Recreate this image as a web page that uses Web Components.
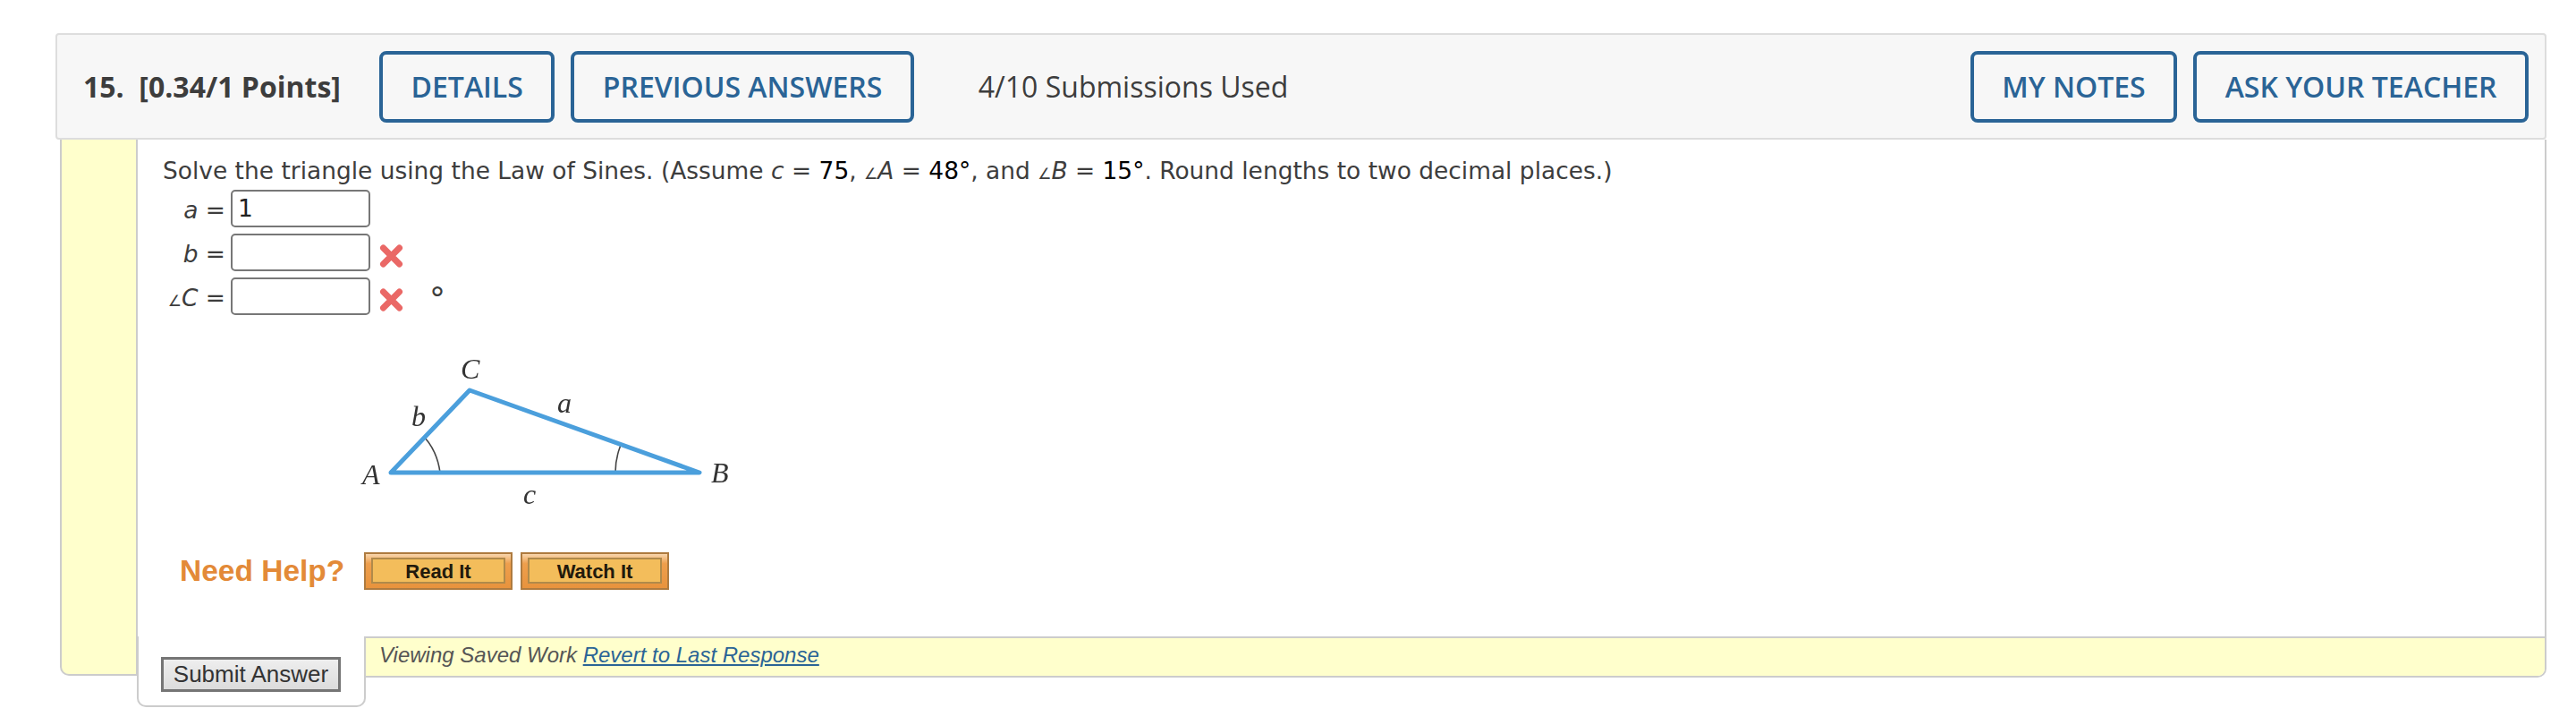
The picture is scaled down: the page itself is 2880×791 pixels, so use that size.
<!DOCTYPE html>
<html><head><meta charset="utf-8">
<style>
html,body{margin:0;padding:0;background:#fff}
body{font-family:"Open Sans",sans-serif;width:2880px;height:791px;overflow:hidden}
</style></head><body>
<question-card>
  <question-header slot="header" num="15." points="[0.34/1 Points]" used="4/10 Submissions Used"></question-header>
  <question-text></question-text>
  <answer-row label="a" value="1"></answer-row>
  <answer-row label="b" wrong></answer-row>
  <answer-row label="C" angle wrong unit="°"></answer-row>
  <triangle-figure></triangle-figure>
  <help-bar></help-bar>
</question-card>
<script>
function def(name, html){
  customElements.define(name, class extends HTMLElement{
    connectedCallback(){
      if(this.shadowRoot) return;
      const r=this.attachShadow({mode:'open'});
      r.innerHTML=typeof html==='function'?html(this):html;
    }
  });
}
def('outline-button',`<style>
:host{display:inline-flex;box-sizing:border-box;height:80px;align-items:center;justify-content:center;padding:0 31.5px;border:4px solid #2a6496;border-radius:8px;color:#2a6496;font:600 32px/1 "Open Sans",sans-serif;white-space:nowrap}
</style><slot></slot>`);
def('question-header',el=>`<style>
:host{display:flex;box-sizing:border-box;height:119px;margin:0 0 0 -5px;align-items:center;background:#f7f7f7;border:2px solid #ddd;border-radius:4px;padding:0 18px 0 29px;color:#3d3d3d;font-family:"Open Sans",sans-serif}
.t{font:700 32px/1 "Open Sans",sans-serif;white-space:pre;width:331px}
.g{display:flex;gap:18px}
.u{font-size:32px;margin-left:72px;flex:1;white-space:nowrap}
</style>
<span class="t">${el.getAttribute('num')}  ${el.getAttribute('points')}</span>
<span class="g"><outline-button>DETAILS</outline-button><outline-button>PREVIOUS ANSWERS</outline-button></span>
<span class="u">${el.getAttribute('used')}</span>
<span class="g"><outline-button>MY NOTES</outline-button><outline-button>ASK YOUR TEACHER</outline-button></span>`);
def('question-text',`<style>
:host{display:block;font:26.45px/36px "DejaVu Sans",sans-serif;color:#3d3d3d;white-space:nowrap;margin:0 0 7px 28px;height:49px;padding-top:17px;box-sizing:border-box}
b{font-weight:400;color:#000}
small{font-size:17px}
</style>Solve the triangle using the Law of Sines. (Assume <i>c</i> = <b>75</b>, <small><i>∠</i></small><i>A</i> = <b>48°</b>, and <small><i>∠</i></small><i>B</i> = <b>15°</b>. Round lengths to two decimal places.)`);
def('answer-row',el=>{
  const wrong=el.hasAttribute('wrong');
  return `<style>
:host{display:flex;align-items:flex-start;height:49px;font:26.45px/46px "DejaVu Sans",sans-serif;color:#3d3d3d}
.l{box-sizing:border-box;width:104px;text-align:right;padding-right:6px;white-space:nowrap}
small{font-size:17px;font-style:italic}
.in{box-sizing:border-box;width:156px;height:42px;border:2px solid #777;border-radius:5px;padding-left:6px;color:#222;line-height:38px;background:#fff}
svg{display:block;margin:12px 0 0 10px;flex:none;filter:blur(.5px)}
.unit{font-size:36px;line-height:36px;margin-left:29px;margin-top:6px}
</style>
<span class="l">${el.hasAttribute('angle')?'<small>∠</small>':''}<i>${el.getAttribute('label')}</i> =</span>
<span class="in">${el.getAttribute('value')||''}</span>
${wrong?`<svg width="27" height="26" viewBox="0 0 27 26"><path d="M4.5 4L22.5 22M22.5 4L4.5 22" stroke="#ea6866" stroke-width="7" stroke-linecap="round" fill="none"/></svg>`:''}
${el.hasAttribute('unit')?`<span class="unit">${el.getAttribute('unit')}</span>`:''}`});
def('triangle-figure',`<style>
:host{display:block;height:250px;margin-left:261px;margin-top:8px}
svg{display:block;overflow:visible}
text{font:italic 32px "Liberation Serif",serif;fill:#333}
</style>
<svg width="400" height="250" viewBox="0 0 400 250">
<g style="filter:blur(.6px)">
<path d="M60 122Q74 138 77 161M279 130Q273 145 273 161" fill="none" stroke="#444" stroke-width="1.6"/>
<path d="M22 161L110 69L367 161Z" fill="none" stroke="#4b9fdc" stroke-width="5" stroke-linejoin="round"/>
<text x="100" y="56">C</text><text x="208" y="94">a</text><text x="45" y="109">b</text><text x="-10" y="174">A</text><text x="380" y="172">B</text><text x="170" y="196">c</text>
</g></svg>`);
def('help-button',`<style>
:host{display:flex;box-sizing:border-box;width:166px;height:42px;border:2px solid #ae7b3f;background:linear-gradient(#f8d6ad 0,#ee9f4d 28%,#e8933d 100%);padding:4px 6px 5px 6px}
span{flex:1;display:flex;align-items:center;justify-content:center;box-sizing:border-box;padding-top:3px;border:2px solid #b08a4a;background:#f3bd5b;font:700 22px/1 "Liberation Sans",sans-serif;color:#221a0c}
</style><span><slot></slot></span>`);
def('help-bar',`<style>
:host{display:flex;align-items:center;margin:0 0 0 47px;height:42px;gap:9px}
.n{font:700 33.5px/42px "Liberation Sans",sans-serif;color:#e38a38;width:196px;white-space:nowrap;margin-right:1px}
</style><span class="n">Need Help?</span><help-button>Read It</help-button><help-button>Watch It</help-button>`);
def('saved-bar',`<style>
:host{display:block;flex:1;box-sizing:border-box;height:44px;background:#ffc;border-top:2px solid #ccc;font:italic 24px/38px "Liberation Sans",sans-serif;color:#555;padding:0 0 0 15px;white-space:nowrap}
a{color:#2a6496;text-decoration:underline}
</style>Viewing Saved Work <a>Revert to Last Response</a>`);
def('question-card',`<style>
:host{display:block;box-sizing:border-box;width:2780px;margin:37px 0 0 67px}
.b{display:flex;height:634px;align-items:stretch}
.side{box-sizing:border-box;width:87px;margin-bottom:35px;background:#ffc;border:solid #ccc;border-width:0 2px 2px 2px;border-radius:0 0 0 10px;flex:none}
.m{flex:1;display:flex;flex-direction:column;min-width:0}
.c{box-sizing:border-box;height:555px;border-right:2px solid #ccc}
.f{display:flex;height:79px}
.tab{box-sizing:border-box;width:256px;height:79px;background:#fff;border:solid #ccc;border-width:0 2px 2px 2px;border-radius:0 0 10px 10px;margin-left:-1px;padding:23px 0 0 25px;flex:none}
.sub{box-sizing:border-box;display:block;width:201px;height:39px;border:3px solid #757575;background:linear-gradient(#eee,#dcdcdc);font:26px/32px "Liberation Sans",sans-serif;color:#333;text-align:center}
.barw{flex:1;display:flex;box-sizing:border-box;height:46px;border:solid #ccc;border-width:0 2px 2px 0;border-radius:0 0 10px 0;overflow:hidden}
</style>
<slot name="header"></slot>
<div class="b"><div class="side"></div><div class="m"><div class="c"><slot></slot></div>
<div class="f"><div class="tab"><span class="sub">Submit Answer</span></div><div class="barw"><saved-bar></saved-bar></div></div></div></div>`);
</script>
</body></html>
